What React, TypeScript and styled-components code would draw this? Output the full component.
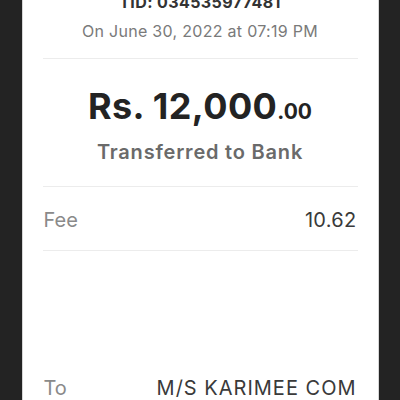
import React from 'react'
import styled, { createGlobalStyle } from 'styled-components'

const GlobalStyle = createGlobalStyle`
  html, body {
    margin: 0;
    padding: 0;
    background: #232323;
    overflow: hidden;
  }
  body {
    font-family: Inter, "Liberation Sans", sans-serif;
  }
`

const Screen = styled.div`
  width: 400px;
  height: 400px;
  display: flex;
  justify-content: center;
  background: #232323;
  overflow: hidden;
`

const Card = styled.div`
  width: 357px;
  margin-top: -8px;
  background: #ffffff;
  border-left: 1px solid #d6d6d6;
  border-right: 1px solid #d6d6d6;
  box-sizing: border-box;
  padding: 0 20px;
  display: flex;
  flex-direction: column;
`

const Header = styled.div`
  display: flex;
  flex-direction: column;
  align-items: center;
  padding-bottom: 17px;
  border-bottom: 1px solid #ececec;
`

const Tid = styled.div`
  font-size: 16px;
  font-weight: 700;
  color: #333;
  line-height: 20px;
  letter-spacing: 0.4px;
`

const DateLine = styled.div`
  margin-top: 9px;
  font-size: 16px;
  color: #7a7a7a;
  line-height: 20px;
  letter-spacing: 0.3px;
`

const AmountBlock = styled.div`
  display: flex;
  flex-direction: column;
  align-items: center;
  padding: 25px 0 22px;
  border-bottom: 1px solid #ececec;
`

const Amount = styled.div`
  font-size: 36px;
  font-weight: 700;
  color: #232323;
  line-height: 44px;
  letter-spacing: 0.4px;
`

const Cents = styled.span`
  font-size: 21px;
  letter-spacing: 0;
`

const Subtitle = styled.div`
  margin-top: 6px;
  font-size: 20px;
  font-weight: 600;
  color: #6a6a6a;
  line-height: 24px;
  letter-spacing: 0.8px;
`

const Row = styled.div<{ $tall?: boolean; $noBorder?: boolean }>`
  display: flex;
  justify-content: space-between;
  align-items: ${({ $tall }) => ($tall ? 'flex-end' : 'center')};
  height: ${({ $tall }) => ($tall ? '149px' : '64px')};
  padding: ${({ $tall }) => ($tall ? '0 1px' : '3px 1px 0')};
  box-sizing: border-box;
  border-bottom: ${({ $noBorder }) => ($noBorder ? 'none' : '1px solid #ececec')};
`

const Label = styled.div`
  font-size: 20px;
  color: #8a8a8a;
  line-height: 24px;
`

const Value = styled.div<{ $spaced?: boolean }>`
  font-size: 20px;
  color: #3a3a3a;
  line-height: 24px;
  letter-spacing: ${({ $spaced }) => ($spaced ? '1px' : '0.3px')};
`

export default function App() {
  return (
    <>
      <GlobalStyle />
      <Screen>
        <Card>
          <Header>
            <Tid>TID: 034535977481</Tid>
            <DateLine>On June 30, 2022 at 07:19 PM</DateLine>
          </Header>
          <AmountBlock>
            <Amount>
              Rs. 12,000<Cents>.00</Cents>
            </Amount>
            <Subtitle>Transferred to Bank</Subtitle>
          </AmountBlock>
          <Row>
            <Label>Fee</Label>
            <Value>10.62</Value>
          </Row>
          <Row $tall $noBorder>
            <Label>To</Label>
            <Value $spaced>M/S KARIMEE COM</Value>
          </Row>
        </Card>
      </Screen>
    </>
  )
}
